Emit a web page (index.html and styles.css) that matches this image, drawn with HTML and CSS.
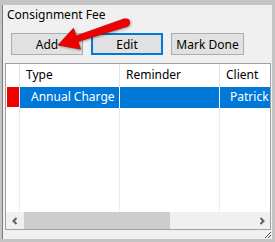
FILE: index.html
```html
<!DOCTYPE html>
<html lang="en">
<head>
  <meta charset="UTF-8" />
  <title>Consignment Fee</title>
  <link rel="stylesheet" href="styles.css">
</head>
<body>
  <div class="panel">
    <div class="title">Consignment Fee</div>
    <div class="btn-row">
      <button class="btn">Add</button>
      <button class="btn focused">Edit</button>
      <button class="btn">Mark Done</button>
    </div>
    <div class="grid">
      <div class="grid-head">
        <div class="cell rowhead"></div>
        <div class="cell col">Type</div>
        <div class="cell col">Reminder</div>
        <div class="cell col last">Client</div>
      </div>
      <div class="grid-row selected">
        <div class="cell rowhead"><span class="marker"></span></div>
        <div class="cell col">Annual Charge</div>
        <div class="cell col"></div>
        <div class="cell col last">Patrick</div>
      </div>
      <div class="grid-fill">
        <div class="cell rowhead"></div>
        <div class="cell col"></div>
        <div class="cell col"></div>
        <div class="cell col last"></div>
      </div>
      <div class="hscroll">
        <div class="sb-btn">
          <svg width="8" height="8" viewBox="0 0 8 8"><path d="M5.5 1 L2.5 4 L5.5 7" fill="none" stroke="#606060" stroke-width="2"/></svg>
        </div>
        <div class="sb-track"><div class="sb-thumb"></div></div>
        <div class="sb-btn">
          <svg width="8" height="8" viewBox="0 0 8 8"><path d="M2.5 1 L5.5 4 L2.5 7" fill="none" stroke="#606060" stroke-width="2"/></svg>
        </div>
      </div>
    </div>
    <svg class="grip" width="8" height="8" viewBox="0 0 8 8">
      <path d="M7 1 L1 7 M7 4 L4 7" stroke="#505050" stroke-width="1"/>
    </svg>
  </div>

  <!-- callout arrow pointing at the Add button -->
  <svg class="callout" width="275" height="80" viewBox="0 0 275 80">
    <polygon points="58,45 73.5,28.3 76.1,35.9 124.7,18.7 127.3,26.3 77.9,41.5 80.5,49.1" fill="#ee0000" stroke="#c80000" stroke-width="0.8" stroke-linejoin="round"/>
    <circle cx="126" cy="22.5" r="4" fill="#ee0000"/>
  </svg>
</body>
</html>
```

FILE: styles.css
```css
body {
  margin: 0;
  background: #c4c4c4;
  font-family: 'Noto Sans', 'Liberation Sans', sans-serif;
  font-size: 12px;
  color: #000;
  width: 275px;
  height: 242px;
  overflow: hidden;
}
.panel {
  position: relative;
  margin: 5px 0 0 2px;
  width: 270px;
  height: 234px;
  border-left: 1px solid #7d7d7d;
  background: #f0f0f0;
  box-sizing: border-box;
}
.title {
  height: 28px;
  padding: 2px 0 0 4px;
  box-sizing: border-box;
  line-height: 16px;
}
.btn-row {
  display: flex;
  gap: 8px;
  padding-left: 8px;
  height: 22px;
}
.btn {
  width: 72px;
  height: 22px;
  border: 1px solid #adadad;
  background: #e1e1e1;
  font-family: inherit;
  font-size: 12px;
  padding: 0;
  color: #000;
}
.btn:last-child {
  width: 73px;
}
.btn.focused {
  border: 2px solid #0078d7;
}
.grid {
  margin: 8px 0 0 2px;
  width: 266px;
  height: 167px;
  border: 1px solid #a0a0a0;
  background: #fff;
  box-sizing: border-box;
  display: flex;
  flex-direction: column;
  overflow: hidden;
}
.grid-head,
.grid-row,
.grid-fill {
  display: flex;
  flex-shrink: 0;
}
.grid-head {
  height: 23px;
  line-height: 22px;
}
.grid-row {
  height: 21px;
  line-height: 20px;
}
.grid-fill {
  flex: 1;
}
.cell {
  flex-shrink: 0;
  box-sizing: border-box;
  white-space: nowrap;
  overflow: hidden;
}
.rowhead {
  width: 14px;
  border-right: 1px solid #e3e3e3;
}
.col {
  width: 100px;
  border-right: 1px solid #e3e3e3;
  padding-left: 6px;
}
.col.last {
  width: 60px;
  border-right: none;
}
.grid-row .col {
  padding-left: 11px;
}
.grid-row .col.last {
  padding-left: 10px;
}
.selected .col {
  background: #0078d7;
  color: #fff;
  border-right-color: #ffffff;
}
.selected .rowhead {
  padding: 0 0 1px 1px;
}
.marker {
  display: block;
  height: 20px;
  background: #f00000;
}
.grid-fill .rowhead,
.grid-fill .col {
  border-right: 1px dotted #d8d8d8;
}
.grid-fill .col.last {
  border-right: none;
}
.hscroll {
  display: flex;
  height: 17px;
  flex-shrink: 0;
  background: #f0f0f0;
}
.sb-btn {
  width: 17px;
  display: flex;
  align-items: center;
  justify-content: center;
}
.sb-track {
  flex: 1;
  padding-left: 1px;
}
.sb-thumb {
  width: 146px;
  height: 17px;
  background: #cdcdcd;
}
.grip {
  position: absolute;
  right: 0;
  bottom: 0;
}
.callout {
  position: absolute;
  left: 0;
  top: 0;
  filter: drop-shadow(1px 1px 1px rgba(0, 0, 0, 0.35));
}
```
